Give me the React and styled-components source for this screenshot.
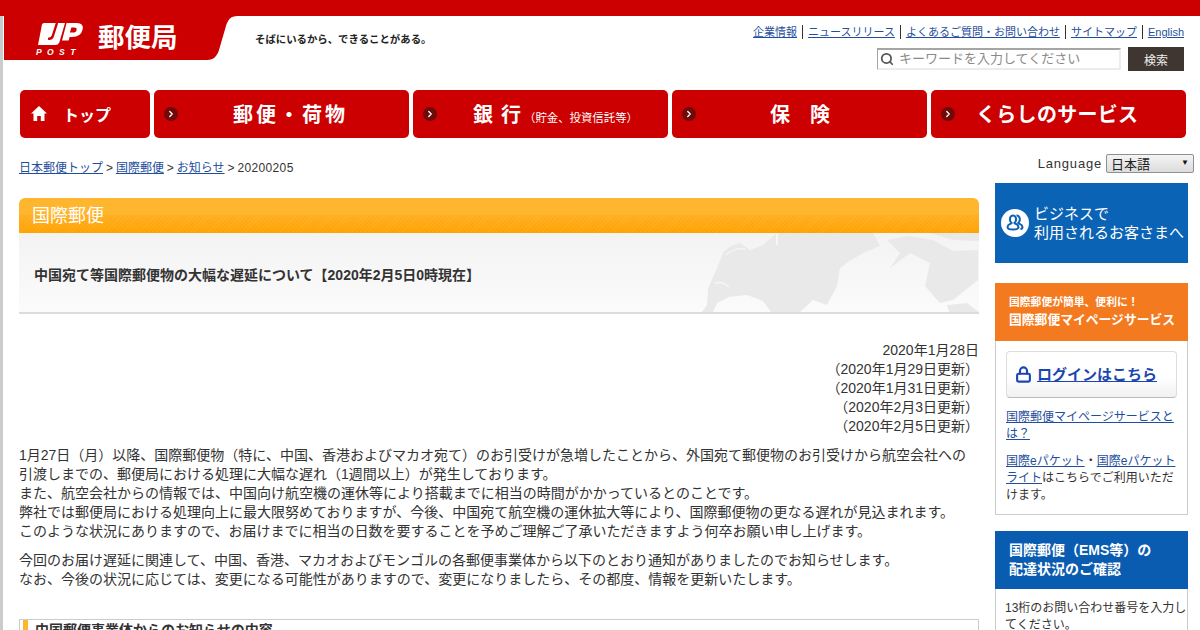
import React from "react";
import styled, { createGlobalStyle } from "styled-components";
import { Search, Lock, ChevronRight } from "lucide-react";

const GlobalStyle = createGlobalStyle`
  html, body {
    margin: 0;
    padding: 0;
    height: 630px;
    overflow: hidden;
    background: #fff;
  }
  body {
    font-family: "Liberation Sans", "Noto Sans CJK JP", sans-serif;
    font-size: 14px;
    color: #333;
    text-spacing-trim: space-all;
  }
  a {
    color: #1f4f9c;
    text-decoration: underline;
  }
`;

const Page = styled.div`
  border-left: 3px solid #ccc;
  min-height: 630px;
`;

const TopBar = styled.div`
  height: 16px;
  margin-left: -3px;
  background: #cc0000;
`;

const Header = styled.header`
  display: flex;
  justify-content: space-between;
  height: 74px;
`;

const Brand = styled.div`
  display: flex;
  align-items: flex-start;
`;

const LogoBlock = styled.div`
  width: 234px;
  height: 44px;
  padding-left: 34px;
  box-sizing: border-box;
  margin-left: 1px;
  display: flex;
  align-items: center;
  gap: 13px;
  background: #cc0000;
  clip-path: path("M0 0 H234 C226 0 224 4 222 10 L215 34 C213 40 210 44 203 44 H0 Z");
`;

const LogoMark = styled.div`
  display: flex;
  flex-direction: column;
  align-items: flex-start;
  width: 47px;
  margin-top: 2px;
`;

const PostText = styled.span`
  font-family: "Liberation Sans", sans-serif;
  font-size: 8.5px;
  font-weight: 700;
  font-style: italic;
  letter-spacing: 5.4px;
  line-height: 8px;
  color: #fff;
  margin: 2px 0 0 -2px;
  white-space: nowrap;
`;

const OfficeName = styled.span`
  font-size: 26.5px;
  font-weight: 700;
  color: #fff;
  line-height: 30px;
`;

const Tagline = styled.span`
  margin: 17px 0 0 17px;
  font-size: 10.4px;
  font-weight: 700;
  color: #222;
  line-height: 14px;
`;

const Tools = styled.div`
  display: flex;
  flex-direction: column;
  align-items: flex-end;
  padding: 9px 16px 0 0;
`;

const TopLinks = styled.nav`
  display: flex;
  align-items: center;
  height: 14px;
  font-size: 11px;
`;

const TopLink = styled.a`
  padding: 0 5px;
  line-height: 14px;
  border-left: ${(p) => (p.$first ? "none" : "1px solid #333")};
  &:last-child {
    padding-right: 0;
  }
`;

const SearchRow = styled.form`
  display: flex;
  align-items: flex-start;
  gap: 7px;
  margin-top: 8px;
`;

const SearchField = styled.div`
  display: flex;
  align-items: center;
  gap: 5px;
  width: 244px;
  height: 22px;
  margin-top: 1px;
  padding-left: 2px;
  box-sizing: border-box;
  border: 2px solid #ececec;
  border-top-color: #a5a5a5;
  border-left-color: #a5a5a5;
  border-left-width: 1px;
  color: #555;
`;

const Placeholder = styled.span`
  font-size: 13px;
  color: #8a8a8a;
  line-height: 17px;
  margin-top: -2px;
`;

const SearchButton = styled.button`
  width: 56px;
  height: 24px;
  border: 0;
  padding: 0;
  background: #3f3632;
  color: #eee;
  font: 12px "Liberation Sans", "Noto Sans CJK JP", sans-serif;
`;

const Nav = styled.nav`
  display: grid;
  grid-template-columns: 130px repeat(4, 255px);
  gap: 4px;
  margin-left: 17px;
`;

const NavItem = styled.a`
  display: flex;
  align-items: center;
  height: 48px;
  padding: 0 0 1px 10px;
  box-sizing: border-box;
  border-radius: 5px;
  background: #cc0000;
  color: #fff;
  text-decoration: none;
  font-size: 20px;
  font-weight: 700;
`;

const NavBullet = styled.span`
  flex: none;
  width: 14px;
  height: 14px;
  border-radius: 50%;
  background: #6e0a0a;
  display: flex;
  align-items: center;
  justify-content: center;
`;

const NavLabel = styled.span`
  margin-left: ${(p) => p.$indent};
  letter-spacing: ${(p) => p.$spacing || "0"};
  white-space: nowrap;
`;

const NavSmall = styled.span`
  font-size: 11.4px;
  font-weight: 400;
  letter-spacing: 0;
  margin-left: -5px;
`;

const HomeItem = styled(NavItem)`
  padding-left: 11px;
  gap: 16px;
  font-size: 16px;
`;

const Crumbs = styled.div`
  display: flex;
  justify-content: space-between;
  align-items: flex-start;
  margin: 16px 6px 0 16px;
  height: 29px;
`;

const CrumbTrail = styled.div`
  font-size: 12px;
  line-height: 18px;
  margin-top: 5px;
  word-spacing: -0.4px;
  color: #333;
`;

const CrumbCurrent = styled.span`
  letter-spacing: 0.35px;
`;

const LanguageBox = styled.div`
  display: flex;
  align-items: center;
  gap: 4px;
  font-size: 13px;
  letter-spacing: 0.8px;
  color: #333;
`;

const LanguageSelect = styled.div`
  position: relative;
  width: 82px;
  height: 17px;
  padding-left: 4px;
  border: 1px solid #8f8f8f;
  border-radius: 2px;
  background: linear-gradient(#f4f4f4, #dcdcdc);
  font-size: 13px;
  line-height: 19px;
  letter-spacing: 0;
  color: #222;
  &::after {
    content: "▼";
    position: absolute;
    right: 4px;
    top: -2px;
    font-size: 8px;
    color: #111;
  }
`;

const Columns = styled.div`
  display: grid;
  grid-template-columns: 960px 193px;
  gap: 16px;
  margin-left: 16px;
`;

const Main = styled.main`
  min-width: 0;
  padding-top: 15px;
`;

const SectionBand = styled.div`
  height: 35px;
  border-radius: 6px 6px 0 0;
  padding-left: 13px;
  background:
    repeating-linear-gradient(135deg, rgba(255, 255, 255, 0.07) 0 1px, transparent 1px 3px) 0 18px / 100% 17px no-repeat,
    linear-gradient(#ffb62f 0 50%, #ffae1f 50%, #ffa200);
  color: #fff;
  font-size: 18px;
  line-height: 36px;
`;

const TitlePanel = styled.div`
  position: relative;
  height: 79px;
  overflow: hidden;
  background: linear-gradient(#f3f3f3, #fbfbfb);
  border-bottom: 2px solid #dcdcdc;
`;

const WorldMap = styled.svg`
  position: absolute;
  right: 0;
  top: 0;
`;

const PageTitle = styled.h1`
  position: relative;
  margin: 0;
  padding: 33px 0 0 15px;
  font-size: 14px;
  font-weight: 700;
  line-height: 19px;
  color: #333;
`;

const DateList = styled.div`
  margin-top: 27px;
  text-align: right;
  font-size: 14px;
  line-height: 19px;
`;

const Paragraph = styled.p`
  margin: ${(p) => p.$top || "0"} 0 0;
  font-size: 14px;
  line-height: 19px;
`;

const NoticeBox = styled.div`
  margin-top: 30px;
  height: 60px;
  border: 1px solid #ccc;
  padding-left: 15px;
  position: relative;
  font-size: 14px;
  font-weight: 700;
  line-height: 20px;
  &::before {
    content: "";
    position: absolute;
    left: 3px;
    top: 0;
    bottom: 0;
    width: 5px;
    background: #ffb62f;
  }
`;

const Sidebar = styled.aside`
  display: flex;
  flex-direction: column;
`;

const BusinessBanner = styled.a`
  display: flex;
  align-items: center;
  gap: 5px;
  height: 80px;
  padding-left: 6px;
  background: #0a63b4;
  color: #fff;
  font-size: 15px;
  line-height: 19px;
  text-decoration: none;
`;

const UserDisc = styled.span`
  display: flex;
  align-items: center;
  justify-content: center;
  flex: none;
  width: 28px;
  height: 28px;
  border-radius: 50%;
  background: #fff;
`;

const OrangeHead = styled.div`
  margin-top: 20px;
  height: 58px;
  padding: 12px 0 0 14px;
  box-sizing: border-box;
  background: #f47a20;
  color: #fff;
  font-weight: 700;
`;

const OrangeSub = styled.div`
  font-size: 10.8px;
  line-height: 14px;
`;

const OrangeMain = styled.div`
  font-size: 12.8px;
  line-height: 22px;
`;

const PageBox = styled.div`
  height: 174px;
  box-sizing: border-box;
  padding: 10px 10px 0;
  border: 1px solid #ccc;
  border-top: 0;
  font-size: 12px;
  line-height: 17px;
`;

const LoginButton = styled.a`
  display: flex;
  align-items: center;
  gap: 5px;
  height: 47px;
  box-sizing: border-box;
  padding-left: 8px;
  border: 1px solid #ddd;
  border-bottom-color: #bbb;
  border-radius: 4px;
  background: linear-gradient(#fff 55%, #f1f1f1);
  color: #1c46b0;
  font-size: 15px;
  font-weight: 700;
`;

const BoxText = styled.p`
  margin: ${(p) => p.$top || "0"} 0 0;
`;

const BlueHead = styled.div`
  margin-top: 16px;
  height: 58px;
  padding: 10px 0 0 14px;
  box-sizing: border-box;
  background: #0a5cb0;
  color: #fff;
  font-size: 14px;
  font-weight: 700;
  line-height: 19px;
`;

const TrackBox = styled.div`
  height: 80px;
  padding: 11px 0 0 9px;
  border: 1px solid #ccc;
  border-top: 0;
  font-size: 12px;
  line-height: 17px;
`;

const JpMark = () => (
  <svg width="46" height="23" viewBox="0 0 46 23" aria-hidden="true">
    <path d="M4 1.5 Q4.5 0 6 0 H27 L21.3 19.5 Q20.3 22 17 22 H0 Z" fill="#fff" />
    <path d="M19 0 L14.6 13.5 Q13.6 16.2 10 15.6" fill="none" stroke="#cc0000" strokeWidth="2.4" />
    <path
      d="M28.6 0 H39 Q46 0 44.6 6.5 Q43 14 34 14 H31.6 L30.6 17.5 H24 Z M33.4 4.6 L31.9 9.6 H35 Q38 9.6 38.6 7 Q39 4.6 36 4.6 Z"
      fill="#fff"
      fillRule="evenodd"
    />
  </svg>
);

const HomeIcon = () => (
  <svg width="16" height="15" viewBox="0 0 16 15" aria-hidden="true">
    <path d="M8 0 L16 7.5 H13.5 V15 H9.8 V10 H6.2 V15 H2.5 V7.5 H0 Z" fill="#fff" />
  </svg>
);

const UsersIcon = () => (
  <svg width="20" height="20" viewBox="0 0 20 20" fill="none" stroke="#0a63b4" strokeWidth="2" aria-hidden="true">
    <path d="M8 2.5 C5.5 2.5 4.8 5 5 7 C5.2 8.5 6 9.6 6.6 10 C6 11 2.5 11.5 2.5 14 C2.5 16 4 16.5 8 16.5 C12 16.5 13.5 16 13.5 14 C13.5 11.5 10 11 9.4 10 C10 9.6 10.8 8.5 11 7 C11.2 5 10.5 2.5 8 2.5 Z" />
    <path d="M11.5 2.6 C14.2 2.4 15 5 14.8 7 C14.6 8.5 13.8 9.6 13.2 10 C13.8 11 17.5 11.5 17.5 14 C17.5 15.5 16.5 16 15.5 16.2" />
  </svg>
);

const MapShapes = () => (
  <WorldMap width="280" height="79" viewBox="0 0 280 79" aria-hidden="true">
    <g fill="#e9e9e9">
      <path d="M3 79 L8 72 L9 55 L16 40 L24 20 Q30 12 41 10 L51 17 L64 12 L78 0 H174 L181 13 L164 20 L151 28 L141 35 L138 53 L128 72 L114 67 L101 79 H72 L64 68 L48 62 L30 64 L18 70 L14 79 Z" />
      <path d="M209 3 L234 7 L254 18 L279 17 V47 L254 67 L241 70 L226 53 L231 30 L211 20 L191 35 L201 20 L188 7 Z" />
      <path d="M231 0 H280 V8 L254 7 Z" />
      <path d="M248 72 L268 70 L280 79 H250 Z" />
    </g>
    <g fill="none" stroke="#f6f6f6" strokeWidth="1.4">
      <path d="M27 22 Q36 14 46 16" />
      <path d="M78 0 L78 12" strokeWidth="2" />
      <path d="M140 40 Q146 30 156 26" />
      <path d="M16 50 Q24 48 30 54" />
    </g>
  </WorldMap>
);

const NavEntry = ({ children, indent, spacing }) => (
  <NavItem href="#">
    <NavBullet>
      <ChevronRight size={10} color="#fff" strokeWidth={3} />
    </NavBullet>
    <NavLabel $indent={indent} $spacing={spacing}>
      {children}
    </NavLabel>
  </NavItem>
);

export default function App() {
  return (
    <Page>
      <GlobalStyle />
      <TopBar />
      <Header>
        <Brand>
          <LogoBlock>
            <LogoMark>
              <JpMark />
              <PostText>POST</PostText>
            </LogoMark>
            <OfficeName>郵便局</OfficeName>
          </LogoBlock>
          <Tagline>そばにいるから、できることがある。</Tagline>
        </Brand>
        <Tools>
          <TopLinks>
            <TopLink href="#" $first>企業情報</TopLink>
            <TopLink href="#">ニュースリリース</TopLink>
            <TopLink href="#">よくあるご質問・お問い合わせ</TopLink>
            <TopLink href="#">サイトマップ</TopLink>
            <TopLink href="#">English</TopLink>
          </TopLinks>
          <SearchRow>
            <SearchField>
              <Search size={14} strokeWidth={3} />
              <Placeholder>キーワードを入力してください</Placeholder>
            </SearchField>
            <SearchButton type="button">検索</SearchButton>
          </SearchRow>
        </Tools>
      </Header>
      <Nav>
        <HomeItem href="#">
          <HomeIcon />
          トップ
        </HomeItem>
        <NavEntry indent="55px" spacing="3px">郵便・荷物</NavEntry>
        <NavEntry indent="36px" spacing="8px">
          銀行
          <NavSmall>（貯金、投資信託等）</NavSmall>
        </NavEntry>
        <NavEntry indent="74px" spacing="20px">保険</NavEntry>
        <NavEntry indent="21px" spacing="0.3px">くらしのサービス</NavEntry>
      </Nav>
      <Crumbs>
        <CrumbTrail>
          <a href="#">日本郵便トップ</a> &gt; <a href="#">国際郵便</a> &gt; <a href="#">お知らせ</a> &gt; <CrumbCurrent>20200205</CrumbCurrent>
        </CrumbTrail>
        <LanguageBox>
          Language
          <LanguageSelect>日本語</LanguageSelect>
        </LanguageBox>
      </Crumbs>
      <Columns>
        <Main>
          <SectionBand>国際郵便</SectionBand>
          <TitlePanel>
            <MapShapes />
            <PageTitle>中国宛て等国際郵便物の大幅な遅延について【2020年2月5日0時現在】</PageTitle>
          </TitlePanel>
          <DateList>
            2020年1月28日
            <br />
            （2020年1月29日更新）
            <br />
            （2020年1月31日更新）
            <br />
            （2020年2月3日更新）
            <br />
            （2020年2月5日更新）
          </DateList>
          <Paragraph $top="10px">
            1月27日（月）以降、国際郵便物（特に、中国、香港およびマカオ宛て）のお引受けが急増したことから、外国宛て郵便物のお引受けから航空会社への引渡しまでの、郵便局における処理に大幅な遅れ（1週間以上）が発生しております。
            <br />
            また、航空会社からの情報では、中国向け航空機の運休等により搭載までに相当の時間がかかっているとのことです。
            <br />
            弊社では郵便局における処理向上に最大限努めておりますが、今後、中国宛て航空機の運休拡大等により、国際郵便物の更なる遅れが見込まれます。
            <br />
            このような状況にありますので、お届けまでに相当の日数を要することを予めご理解ご了承いただきますよう何卒お願い申し上げます。
          </Paragraph>
          <Paragraph $top="10px">
            今回のお届け遅延に関連して、中国、香港、マカオおよびモンゴルの各郵便事業体から以下のとおり通知がありましたのでお知らせします。
            <br />
            なお、今後の状況に応じては、変更になる可能性がありますので、変更になりましたら、その都度、情報を更新いたします。
          </Paragraph>
          <NoticeBox>中国郵便事業体からのお知らせの内容</NoticeBox>
        </Main>
        <Sidebar>
          <BusinessBanner href="#">
            <UserDisc>
              <UsersIcon />
            </UserDisc>
            <span>
              ビジネスで
              <br />
              利用されるお客さまへ
            </span>
          </BusinessBanner>
          <OrangeHead>
            <OrangeSub>国際郵便が簡単、便利に！</OrangeSub>
            <OrangeMain>国際郵便マイページサービス</OrangeMain>
          </OrangeHead>
          <PageBox>
            <LoginButton href="#">
              <Lock size={17} strokeWidth={3} color="#1c46b0" />
              ログインはこちら
            </LoginButton>
            <BoxText $top="11px">
              <a href="#">国際郵便マイページサービスとは？</a>
            </BoxText>
            <BoxText $top="10px">
              <a href="#">国際eパケット</a>・<a href="#">国際eパケットライト</a>はこちらでご利用いただけます。
            </BoxText>
          </PageBox>
          <BlueHead>
            国際郵便（EMS等）の
            <br />
            配達状況のご確認
          </BlueHead>
          <TrackBox>13桁のお問い合わせ番号を入力してください。</TrackBox>
        </Sidebar>
      </Columns>
    </Page>
  );
}
